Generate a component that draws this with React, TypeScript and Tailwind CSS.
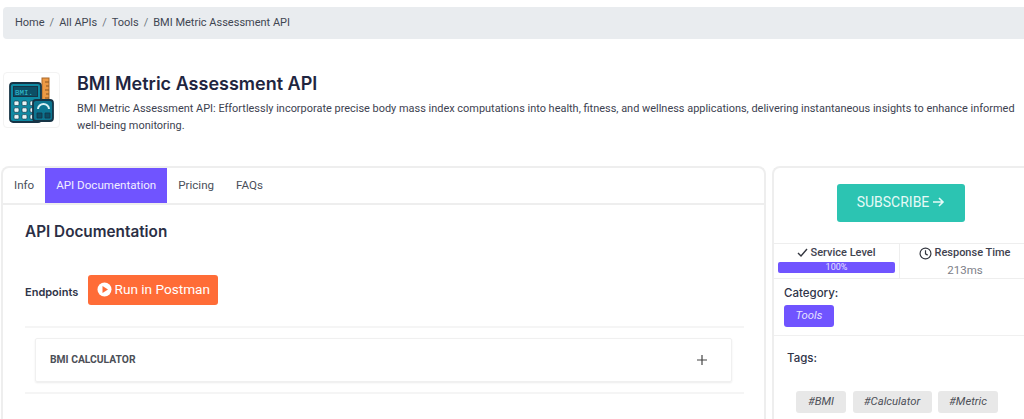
import React from 'react';

const BmiIcon = () => (
  <svg width="46" height="47" viewBox="0 0 46 47" fill="none">
    {/* ruler */}
    <rect x="33" y="1" width="7" height="24" fill="#ee9a45" stroke="#a9682a" strokeWidth="1" />
    <path d="M36 5h4M37 9h3M36 13h4M37 17h3M36 21h4" stroke="#8a5520" strokeWidth="1" />
    {/* calculator */}
    <rect x="1" y="6" width="31" height="39" rx="3" fill="#0f8aa3" stroke="#173446" strokeWidth="1.8" />
    <rect x="4.5" y="9.5" width="24" height="10" fill="#0c4f66" stroke="#173446" strokeWidth="1" />
    <text x="6" y="17.5" fill="#35c3d6" fontSize="7.5" fontFamily="'Liberation Mono', monospace">BMI.</text>
    {[0, 1, 2].map((r) => (
      <g key={r}>
        {[0, 1, 2].map((c) => (
          <rect key={c} x={5 + c * 8} y={24 + r * 6.8} width="5" height="4.5" rx="1.2" fill="#e6f4f6" stroke="#173446" strokeWidth="0.7" />
        ))}
      </g>
    ))}
    {/* scale */}
    <rect x="24" y="23" width="20" height="21" rx="3" fill="#0c7590" stroke="#173446" strokeWidth="1.8" />
    <path d="M29 32a5.5 5 0 0 1 11 0" stroke="#d9f1f4" strokeWidth="2" />
    <path d="M28 36h5v5h-5zM36 36h5v5h-5z" fill="#0a4f66" stroke="#173446" strokeWidth="0.8" />
  </svg>
);

const App: React.FC = () => {
  return (
    <div className="w-[1024px] h-[419px] overflow-hidden bg-white font-['Roboto',sans-serif] text-[#3b3f4a]">
      {/* Breadcrumb */}
      <div className="ml-[3px] mt-[7px] w-[1030px] h-[32px] bg-[#e9ecef] rounded-[4px] flex items-center pl-[12px] text-[11px] text-[#3f4652] gap-[5px]">
        <span>Home</span>
        <span className="text-[#6c757d]">/</span>
        <span>All APIs</span>
        <span className="text-[#6c757d]">/</span>
        <span>Tools</span>
        <span className="text-[#6c757d]">/</span>
        <span>BMI Metric Assessment API</span>
      </div>

      {/* Header */}
      <div className="flex mt-[33px] ml-[3px] h-[56px]">
        <div className="w-[57px] h-[56px] rounded-[4px] border border-[#f3f3f3] flex items-center justify-center shrink-0">
          <BmiIcon />
        </div>
        <div className="ml-[17px] w-[945px]">
          <h1 className="font-['Inter',sans-serif] font-semibold text-[18px] leading-[24px] text-[#1f2540]">BMI Metric Assessment API</h1>
          <p className="mt-[4px] text-[10.95px] leading-[17px] text-[#3d4250]">
            BMI Metric Assessment API: Effortlessly incorporate precise body mass index computations into health, fitness, and wellness applications, delivering instantaneous insights to enhance informed well-being monitoring.
          </p>
        </div>
      </div>

      <div className="flex mt-[38px] ml-[1px] gap-[6px] h-[260px]">
        {/* Main card */}
        <div className="w-[765px] shrink-0 bg-white rounded-tl-[8px] rounded-tr-[8px] border-2 border-[#eeeeee] border-b-0">
          <div className="flex h-[37px] border-b-2 border-[#eeeeee] text-[11.6px] text-[#4a4f5a]">
            <div className="px-[11px] flex items-center">Info</div>
            <div className="px-[11px] flex items-center bg-[#7054ff] text-[#f1eeff]">API Documentation</div>
            <div className="px-[11px] flex items-center">Pricing</div>
            <div className="px-[11px] flex items-center">FAQs</div>
          </div>
          <div className="pl-[22px] pr-[20px]">
            <h2 className="mt-[17px] font-['Inter',sans-serif] font-semibold text-[15.3px] leading-[20px] text-[#2b2f45]">API Documentation</h2>
            <div className="mt-[33px] flex items-center h-[30px]">
              <span className="font-['Inter',sans-serif] font-semibold text-[11px] text-[#2f3448] mt-[4px]">Endpoints</span>
              <div className="ml-[10px] w-[130px] h-[30px] bg-[#ff6c37] rounded-[3px] flex items-center justify-center gap-[3px] pb-[1px] text-white text-[13.6px]">
                <svg width="15" height="15" viewBox="0 0 15 15">
                  <circle cx="7.5" cy="7.5" r="7" fill="#fff" />
                  <path d="M5.5 4l5.5 3.5L5.5 11z" fill="#ff6c37" />
                </svg>
                <span>Run in Postman</span>
              </div>
            </div>
            <div className="mt-[21px] border-t-2 border-[#f5f5f5] pt-[10px] pb-[10px]">
              <div className="ml-[10px] mr-[12px] h-[44px] rounded-[2px] border border-[#f0f0f0] shadow-[0_1px_2px_rgba(0,0,0,0.08)] flex items-center justify-between pl-[14px] pr-[23px]">
                <span className="text-[10.3px] font-bold text-[#4c4f57]">BMI CALCULATOR</span>
                <svg width="12" height="12" viewBox="0 0 12 12" stroke="#444" strokeWidth="1.2">
                  <path d="M6 1v10M1 6h10" />
                </svg>
              </div>
            </div>
            <div className="border-t-2 border-[#f5f5f5]" />
          </div>
        </div>

        {/* Sidebar */}
        <div className="w-[270px] shrink-0 bg-white rounded-tl-[8px] border-2 border-[#eeeeee] border-r-0 border-b-0 rounded-bl-[8px]">
          <div className="h-[75px] w-[254px] flex items-start justify-center pt-[16px]">
            <div className="w-[128px] h-[38px] pb-[2px] bg-[#2cc4b2] rounded-[3px] flex items-center justify-center gap-[3px] text-[#e6faf7] text-[14px]">
              <span>SUBSCRIBE</span>
              <svg width="13" height="12" viewBox="0 0 13 12" fill="none" stroke="#e6faf7" strokeWidth="1.6">
                <path d="M1 6h10M7 2l4 4-4 4" />
              </svg>
            </div>
          </div>
          <div className="flex h-[36px] border-y border-[#eeeeee]">
            <div className="w-[126px] border-r border-[#eeeeee] pt-[2px] flex flex-col items-center">
              <div className="flex items-center gap-[2px] text-[11px] font-medium leading-[14px] text-[#3f4350]">
                <svg width="11" height="10" viewBox="0 0 11 10" fill="none" stroke="#33363f" strokeWidth="1.4">
                  <path d="M1 5l3 3 6-7" />
                </svg>
                <span>Service Level</span>
              </div>
              <div className="mt-[2px] w-[117px] h-[11px] rounded-[2px] bg-[#7054ff] text-[9px] leading-[11px] text-center text-[#e6e2ff]">100%</div>
            </div>
            <div className="w-[130px] pt-[2px] flex flex-col items-center">
              <div className="flex items-center gap-[2px] text-[11px] font-medium leading-[14px] text-[#3f4350]">
                <svg width="13" height="13" viewBox="0 0 12 12" fill="none" stroke="#33363f" strokeWidth="1.1">
                  <circle cx="6" cy="6" r="5" />
                  <path d="M6 3v3.3l2 1.2" />
                </svg>
                <span>Response Time</span>
              </div>
              <div className="mt-[3px] text-[11.5px] leading-[14px] text-[#7d8088]">213ms</div>
            </div>
          </div>
          <div className="h-[57px] border-b border-[#f0f0f0] pl-[10px] pt-[7px]">
            <div className="font-['Inter',sans-serif] font-medium text-[11.5px] leading-[14px] text-[#2f3448]">Category:</div>
            <div className="mt-[5px] w-[50px] h-[22px] rounded-[3px] bg-[#7054ff] flex items-center justify-center text-[#e6e2ff] text-[11.3px] italic">Tools</div>
          </div>
          <div className="pl-[13px] pt-[15px]">
            <div className="font-['Inter',sans-serif] font-medium text-[11.5px] leading-[14px] text-[#2f3448]">Tags:</div>
            <div className="mt-[26px] ml-[9px] flex gap-[6.5px] text-[11.3px] italic text-[#4d5058]">
              <span className="w-[50px] h-[22px] rounded-[3px] bg-[#e8e8e8] flex items-center justify-center">#BMI</span>
              <span className="w-[79px] h-[22px] rounded-[3px] bg-[#e8e8e8] flex items-center justify-center">#Calculator</span>
              <span className="w-[60px] h-[22px] rounded-[3px] bg-[#e8e8e8] flex items-center justify-center">#Metric</span>
            </div>
          </div>
        </div>
      </div>
    </div>
  );
};

export default App;
